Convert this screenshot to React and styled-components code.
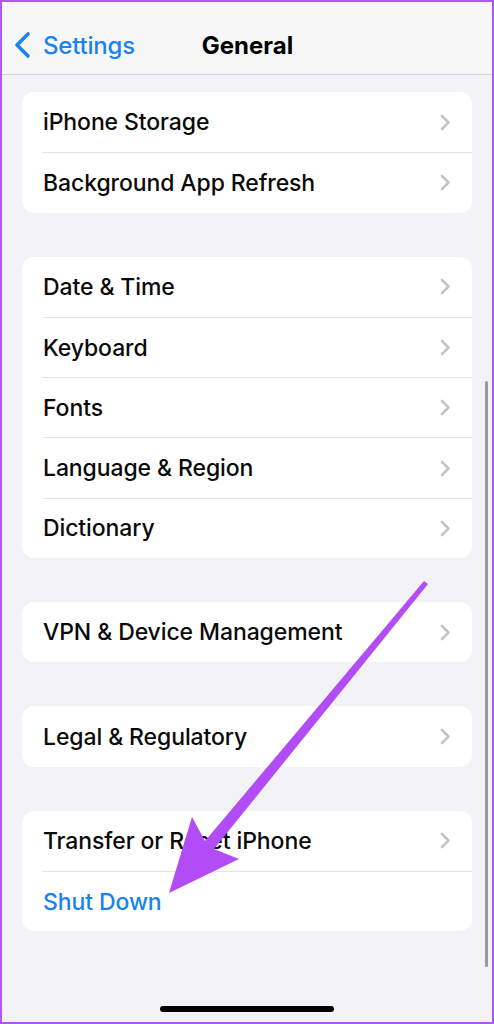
import React from "react";
import styled, { createGlobalStyle } from "styled-components";

const Global = createGlobalStyle`
  html, body { margin: 0; padding: 0; background: #f2f2f7; }
  body { font-family: Inter, "Noto Sans", "Liberation Sans", sans-serif; -webkit-font-smoothing: antialiased; }
`;

const Frame = styled.div`
  position: relative;
  box-sizing: border-box;
  width: 494px;
  height: 1024px;
  border: 2px solid #b456f5;
  background: #f2f2f7;
  display: flex;
  flex-direction: column;
  overflow: hidden;
`;

const NavBar = styled.header`
  box-sizing: border-box;
  height: 73px;
  flex-shrink: 0;
  background: #f7f7f8;
  border-bottom: 1px solid #d3d3d6;
  display: grid;
  grid-template-columns: 1fr auto 1fr;
  align-items: center;
  padding: 14px 0 0 11px;
`;

const Back = styled.div`
  display: flex;
  align-items: center;
  gap: 11px;
  color: #1a82f0;
  font-size: 24px;
  font-weight: 500;
  letter-spacing: -0.2px;
`;

const Title = styled.h1`
  margin: 0 0 0 -10px;
  font-size: 24px;
  font-weight: 700;
  color: #000;
  letter-spacing: 0px;
`;

const Content = styled.main`
  display: flex;
  flex-direction: column;
  gap: 44px;
  padding: 17px 20px 0;
`;

const Card = styled.section`
  background: #fff;
  border-radius: 12px;
  overflow: hidden;
`;

const Row = styled.div`
  box-sizing: border-box;
  height: 60.3px;
  margin-left: 21px;
  padding-right: 21px;
  display: flex;
  align-items: center;
  justify-content: space-between;
  & + & {
    border-top: 1px solid #e3e3e6;
  }
`;

const Label = styled.span`
  font-size: 23px;
  font-weight: 500;
  letter-spacing: -0.1px;
  color: ${(p) => (p.$action ? "#1a82f0" : "#0a0a0a")};
`;

const Spacer = styled.div`
  flex: 1;
`;

const HomeBar = styled.div`
  align-self: center;
  width: 174px;
  height: 6px;
  border-radius: 3px;
  background: #000;
  margin-bottom: 10px;
`;

const ScrollIndicator = styled.div`
  position: absolute;
  left: 483px;
  top: 379px;
  width: 3px;
  height: 586px;
  border-radius: 2px;
  background: #9a9a9e;
`;

const ArrowOverlay = styled.svg`
  position: absolute;
  left: -2px;
  top: -2px;
  width: 494px;
  height: 1024px;
  pointer-events: none;
`;

const Chevron = () => (
  <svg width="11" height="17" viewBox="0 0 11 17">
    <polyline points="2,2 8.5,8.5 2,15" fill="none" stroke="#c4c4c7" strokeWidth="2.6" strokeLinecap="round" strokeLinejoin="round" />
  </svg>
);

const BackChevron = () => (
  <svg width="19" height="28" viewBox="0 0 19 28">
    <polyline points="15,3 4,14 15,25" fill="none" stroke="#1a82f0" strokeWidth="3.6" strokeLinecap="round" strokeLinejoin="round" />
  </svg>
);

const groups = [
  ["iPhone Storage", "Background App Refresh"],
  ["Date & Time", "Keyboard", "Fonts", "Language & Region", "Dictionary"],
  ["VPN & Device Management"],
  ["Legal & Regulatory"],
];

export default function App() {
  return (
    <>
      <Global />
      <Frame>
        <NavBar>
          <Back>
            <BackChevron />
            <span>Settings</span>
          </Back>
          <Title>General</Title>
          <div />
        </NavBar>
        <Content>
          {groups.map((g, i) => (
            <Card key={i}>
              {g.map((item) => (
                <Row key={item}>
                  <Label>{item}</Label>
                  <Chevron />
                </Row>
              ))}
            </Card>
          ))}
          <Card>
            <Row>
              <Label>Transfer or Reset iPhone</Label>
              <Chevron />
            </Row>
            <Row>
              <Label $action>Shut Down</Label>
            </Row>
          </Card>
        </Content>
        <Spacer />
        <HomeBar />
        <ScrollIndicator />
        <ArrowOverlay viewBox="0 0 494 1024">
          <polygon
            points="424,581 205,841 192,817 169,893 239,859 214,849 428,584"
            fill="#b14cf6"
            strokeLinejoin="round"
          />
        </ArrowOverlay>
      </Frame>
    </>
  );
}
